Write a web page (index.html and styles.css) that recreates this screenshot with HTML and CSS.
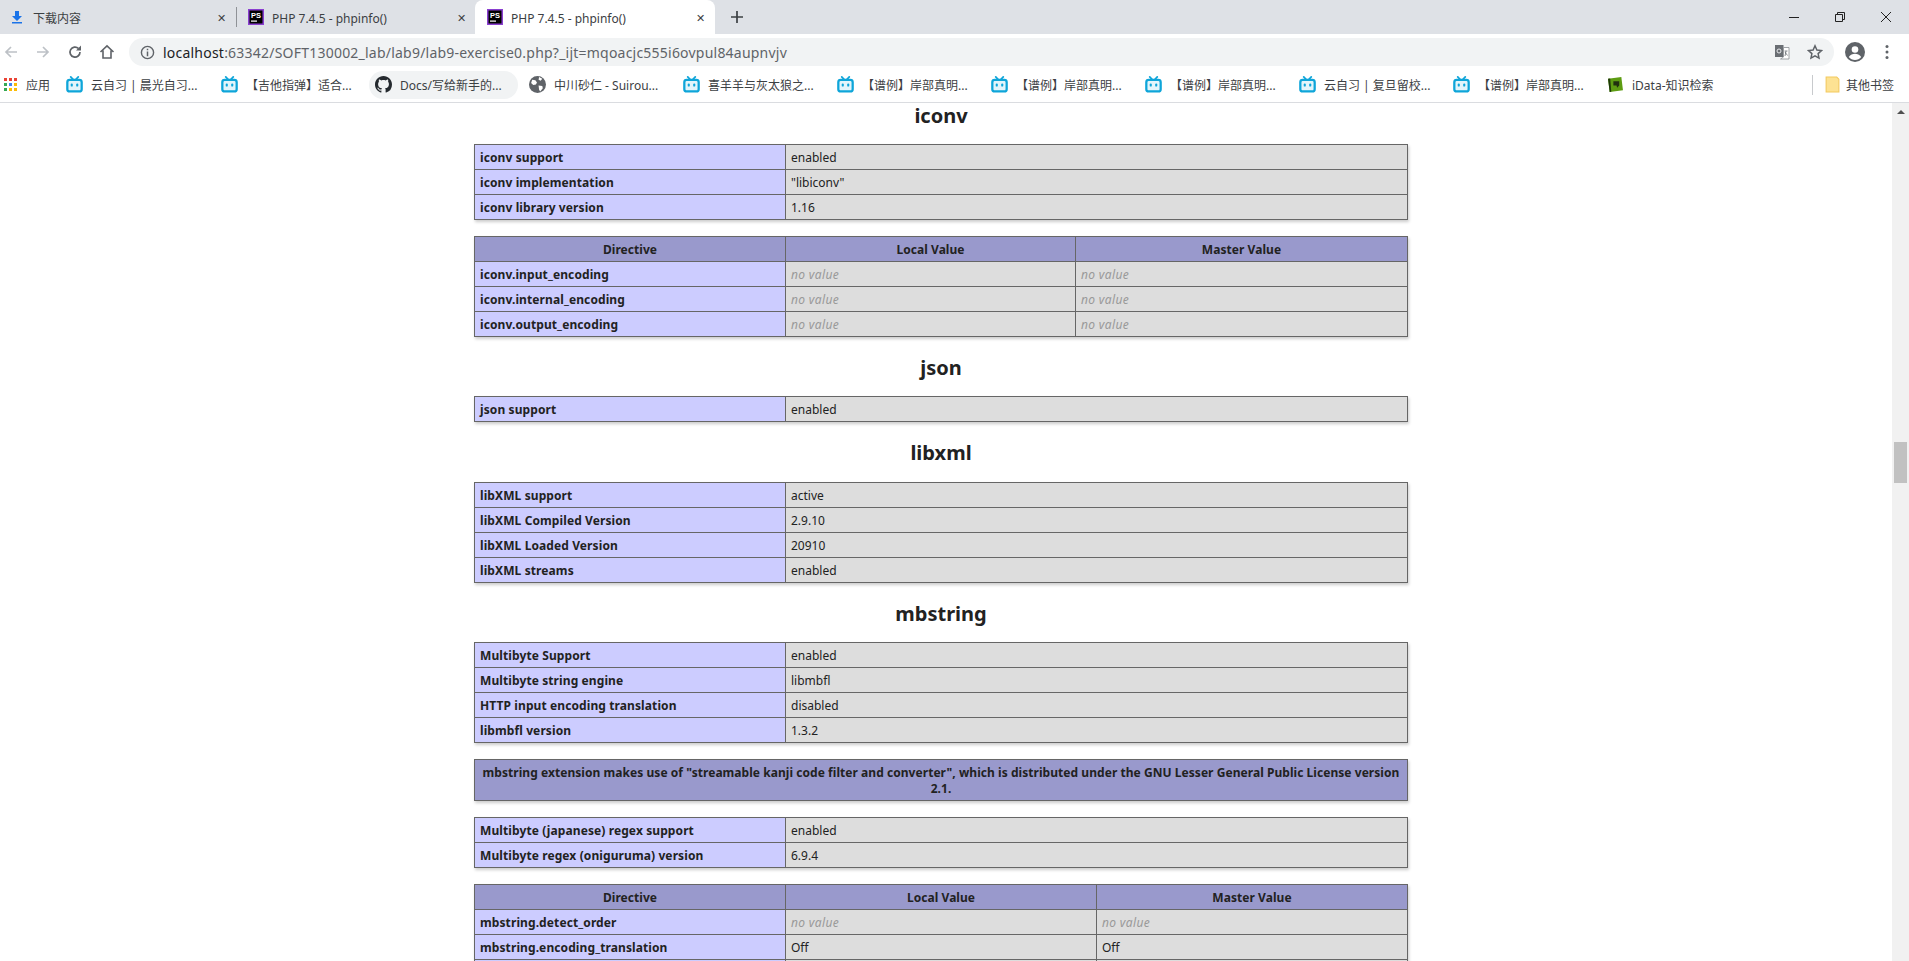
FILE: index.html
```html
<!DOCTYPE html>
<html lang="en">
<head>
    <meta charset="UTF-8">
    <title>PHP 7.4.5 - phpinfo()</title>
    <link rel="stylesheet" href="styles.css">
</head>
<body>
    <svg class="defs" width="0" height="0">
        <symbol id="bili" viewBox="0 0 18 18">
            <path d="M5 1l2.5 2.6M13 1l-2.500 2.600" stroke="#0ea5d9" stroke-width="1.800" stroke-linecap="round" fill="none"/>
            <rect x="1.400" y="4" width="15.200" height="12.400" rx="2.500" fill="#e3f5fb" stroke="#0ea5d9" stroke-width="2.400"/>
            <rect x="5" y="8" width="2.200" height="3.200" rx="1" fill="#0ea5d9"/>
            <rect x="10.800" y="8" width="2.200" height="3.200" rx="1" fill="#0ea5d9"/>
        </symbol>
    </svg>

    <div class="tabstrip">
        <div class="tab tab-downloads">
            <svg class="tab-icon" viewBox="0 0 16 16"><path d="M6 2h4v5h3l-5 5-5-5h3z M3 13h10v1.500H3z" fill="#1a73e8"/></svg>
            <span class="tab-title">下载内容</span>
            <span class="tab-close">✕</span>
        </div>
        <div class="tab tab-second">
            <svg class="tab-icon" viewBox="0 0 16 16">
                <rect width="16" height="16" fill="#8a3fd0"/>
                <rect x="1.500" y="1.500" width="13" height="13" fill="#000"/>
                <text x="3" y="9" class="ps-text">PS</text>
                <rect x="3" y="11.500" width="6" height="1.200" fill="#fff"/>
            </svg>
            <span class="tab-title">PHP 7.4.5 - phpinfo()</span>
            <span class="tab-close">✕</span>
        </div>
        <div class="tab tab-active">
            <svg class="tab-icon" viewBox="0 0 16 16">
                <rect width="16" height="16" fill="#8a3fd0"/>
                <rect x="1.500" y="1.500" width="13" height="13" fill="#000"/>
                <text x="3" y="9" class="ps-text">PS</text>
                <rect x="3" y="11.500" width="6" height="1.200" fill="#fff"/>
            </svg>
            <span class="tab-title">PHP 7.4.5 - phpinfo()</span>
            <span class="tab-close">✕</span>
        </div>
        <svg class="new-tab" viewBox="0 0 12 12"><path d="M6 0v12M0 6h12" stroke="#3c4043" stroke-width="1.700"/></svg>
        <div class="window-controls">
            <svg viewBox="0 0 12 12"><path d="M1 6.500h10" stroke="#222" fill="none"/></svg>
            <svg viewBox="0 0 12 12"><path d="M1.500 3.500h7v7h-7z M3.500 3.500v-2h7v7h-2" stroke="#222" fill="none"/></svg>
            <svg viewBox="0 0 12 12"><path d="M1 1l10 10M11 1L1 11" stroke="#222" fill="none"/></svg>
        </div>
    </div>

    <div class="toolbar">
        <svg class="nav-icon" viewBox="0 0 16 16"><path d="M14 8H3M8 3L3 8l5 5" stroke="#bdc1c6" stroke-width="1.700" fill="none"/></svg>
        <svg class="nav-icon" viewBox="0 0 16 16"><path d="M2 8h11M8 3l5 5-5 5" stroke="#bdc1c6" stroke-width="1.700" fill="none"/></svg>
        <svg class="nav-icon" viewBox="0 0 16 16"><path d="M13 8a5 5 0 1 1-1.500-3.500" stroke="#5f6368" stroke-width="1.700" fill="none"/><path d="M14 1.500v5h-5z" fill="#5f6368"/></svg>
        <svg class="nav-icon" viewBox="0 0 16 16"><path d="M1.500 8L8 1.800 14.500 8M4 6.500V14h8V6.500" stroke="#5f6368" stroke-width="1.600" fill="none"/></svg>
        <div class="omnibox">
            <svg class="info-icon" viewBox="0 0 16 16"><circle cx="8" cy="8" r="6.500" stroke="#5f6368" stroke-width="1.500" fill="none"/><path d="M8 7v5M8 4v1.700" stroke="#5f6368" stroke-width="1.600"/></svg>
            <span class="url"><span class="url-host">localhost</span>:63342/SOFT130002_lab/lab9/lab9-exercise0.php?_ijt=mqoacjc555i6ovpul84aupnvjv</span>
            <svg class="translate-icon" viewBox="0 0 16 16"><rect x="1" y="1" width="8.500" height="12" fill="#6a6e73"/><path d="M9.500 3.500H15V15H6.500l3-2z" fill="#fff" stroke="#8a8e93" stroke-width=".8"/><circle cx="5" cy="7" r="2" stroke="#e8eaed" fill="none"/><path d="M10.500 7h3M12 7l-1 5M11 8l2.500 3.500" stroke="#6a6e73" stroke-width=".8" fill="none"/></svg>
            <svg class="star-icon" viewBox="0 0 16 16"><path d="M8 1.800l1.900 4.200 4.600.5-3.400 3.100.9 4.500L8 11.800l-4 2.300.9-4.500L1.500 6.500l4.600-.5z" stroke="#5f6368" stroke-width="1.500" fill="none"/></svg>
        </div>
        <svg class="avatar-icon" viewBox="0 0 20 20"><circle cx="10" cy="10" r="10" fill="#5f6368"/><circle cx="10" cy="7.500" r="3.300" fill="#fff"/><path d="M3.800 15c1.500-2.600 4-3.300 6.200-3.300s4.700.7 6.200 3.300c-1.500 1.900-3.700 3-6.200 3s-4.700-1.100-6.200-3z" fill="#fff"/></svg>
        <svg class="menu-icon" viewBox="0 0 4 16"><circle cx="2" cy="2.500" r="1.500" fill="#5f6368"/><circle cx="2" cy="8" r="1.500" fill="#5f6368"/><circle cx="2" cy="13.500" r="1.500" fill="#5f6368"/></svg>
    </div>

    <div class="bookmarks">
        <div class="bm bm-apps">
            <svg class="bm-icon apps-icon" viewBox="0 0 14 14">
                <rect x="0" y="0" width="3" height="3" fill="#ea4335"/><rect x="5" y="0" width="3" height="3" fill="#ea4335"/><rect x="10" y="0" width="3" height="3" fill="#ea4335"/>
                <rect x="0" y="5" width="3" height="3" fill="#34a853"/><rect x="5" y="5" width="3" height="3" fill="#4285f4"/><rect x="10" y="5" width="3" height="3" fill="#fbbc05"/>
                <rect x="0" y="10" width="3" height="3" fill="#34a853"/><rect x="5" y="10" width="3" height="3" fill="#fbbc05"/><rect x="10" y="10" width="3" height="3" fill="#fbbc05"/>
            </svg>
            <span>应用</span>
        </div>
        <div class="bm bm-wide"><svg class="bm-icon"><use href="#bili"/></svg><span>云自习 | 晨光自习...</span></div>
        <div class="bm"><svg class="bm-icon"><use href="#bili"/></svg><span>【吉他指弹】适合...</span></div>
        <div class="bm bm-hover">
            <svg class="bm-icon" viewBox="0 0 16 16"><path fill="#24292e" d="M8 0C3.580 0 0 3.580 0 8c0 3.540 2.290 6.530 5.470 7.590.4.070.55-.17.55-.38 0-.19-.01-.82-.01-1.490-2.010.37-2.530-.49-2.690-.94-.09-.23-.48-.94-.82-1.130-.28-.15-.68-.52-.01-.53.63-.01 1.080.58 1.230.82.72 1.210 1.870.87 2.330.66.070-.52.280-.87.510-1.070-1.780-.2-3.640-.89-3.640-3.950 0-.87.310-1.590.820-2.150-.080-.2-.360-1.020.080-2.120 0 0 .670-.210 2.200.820.640-.180 1.320-.270 2-.270s1.360.090 2 .270c1.530-1.040 2.200-.820 2.200-.820.440 1.100.160 1.920.080 2.120.510.560.820 1.270.820 2.150 0 3.070-1.870 3.750-3.650 3.950.290.250.540.730.540 1.480 0 1.070-.010 1.930-.010 2.200 0 .210.150.460.550.380A8.010 8.010 0 0 0 16 8c0-4.420-3.580-8-8-8z"/></svg>
            <span>Docs/写给新手的...</span>
        </div>
        <div class="bm">
            <svg class="bm-icon" viewBox="0 0 16 16"><circle cx="8" cy="8" r="8" fill="#5f6368"/><path d="M3 3.500l3 .5 1.500 2-1 2-2.500.5-2-2zM9 9l3.500.5.5 2-2.500 3-1-1.500zM9.500 1l3 1.500-1.500 2-2-1z" fill="#fff"/></svg>
            <span>中川砂仁 - Suirou...</span>
        </div>
        <div class="bm"><svg class="bm-icon"><use href="#bili"/></svg><span>喜羊羊与灰太狼之...</span></div>
        <div class="bm"><svg class="bm-icon"><use href="#bili"/></svg><span>【谱例】岸部真明...</span></div>
        <div class="bm"><svg class="bm-icon"><use href="#bili"/></svg><span>【谱例】岸部真明...</span></div>
        <div class="bm"><svg class="bm-icon"><use href="#bili"/></svg><span>【谱例】岸部真明...</span></div>
        <div class="bm"><svg class="bm-icon"><use href="#bili"/></svg><span>云自习 | 复旦留校...</span></div>
        <div class="bm"><svg class="bm-icon"><use href="#bili"/></svg><span>【谱例】岸部真明...</span></div>
        <div class="bm">
            <svg class="bm-icon" viewBox="0 0 16 16"><path d="M1 2.500L13.500 1 15 13.500 2.500 15z" fill="#5d9c12"/><path d="M1 2.500L2.500 15 4 14.800 3 2.300z" fill="#1e3a08"/><path d="M6 5h5.500v4L9.500 11 9 9H6z" fill="#20300f"/></svg>
            <span>iData-知识检索</span>
        </div>
        <div class="bm-divider"></div>
        <div class="bm bm-other">
            <svg class="bm-icon" viewBox="0 0 16 16"><path d="M2 1h10l2 2v12H2z" fill="#fde293" stroke="#f3c95f"/></svg>
            <span>其他书签</span>
        </div>
    </div>

    <div class="viewport">
        <div class="page">
            <h2 class="h2-first">iconv</h2>
            <table>
                <colgroup><col class="col-name"><col></colgroup>
                <tr><td class="e">iconv support</td><td class="v">enabled</td></tr>
                <tr><td class="e">iconv implementation</td><td class="v">"libiconv"</td></tr>
                <tr><td class="e">iconv library version</td><td class="v">1.16</td></tr>
            </table>
            <table>
                <colgroup><col class="col-name"><col class="col-local-iconv"><col></colgroup>
                <tr class="h"><th>Directive</th><th>Local Value</th><th>Master Value</th></tr>
                <tr><td class="e">iconv.input_encoding</td><td class="v"><i>no value</i></td><td class="v"><i>no value</i></td></tr>
                <tr><td class="e">iconv.internal_encoding</td><td class="v"><i>no value</i></td><td class="v"><i>no value</i></td></tr>
                <tr><td class="e">iconv.output_encoding</td><td class="v"><i>no value</i></td><td class="v"><i>no value</i></td></tr>
            </table>

            <h2>json</h2>
            <table>
                <colgroup><col class="col-name"><col></colgroup>
                <tr><td class="e">json support</td><td class="v">enabled</td></tr>
            </table>

            <h2>libxml</h2>
            <table>
                <colgroup><col class="col-name"><col></colgroup>
                <tr><td class="e">libXML support</td><td class="v">active</td></tr>
                <tr><td class="e">libXML Compiled Version</td><td class="v">2.9.10</td></tr>
                <tr><td class="e">libXML Loaded Version</td><td class="v">20910</td></tr>
                <tr><td class="e">libXML streams</td><td class="v">enabled</td></tr>
            </table>

            <h2>mbstring</h2>
            <table>
                <colgroup><col class="col-name"><col></colgroup>
                <tr><td class="e">Multibyte Support</td><td class="v">enabled</td></tr>
                <tr><td class="e">Multibyte string engine</td><td class="v">libmbfl</td></tr>
                <tr><td class="e">HTTP input encoding translation</td><td class="v">disabled</td></tr>
                <tr><td class="e">libmbfl version</td><td class="v">1.3.2</td></tr>
            </table>
            <table>
                <tr class="h"><th>mbstring extension makes use of "streamable kanji code filter and converter", which is distributed under the GNU Lesser General Public License version 2.1.</th></tr>
            </table>
            <table>
                <colgroup><col class="col-name"><col></colgroup>
                <tr><td class="e">Multibyte (japanese) regex support</td><td class="v">enabled</td></tr>
                <tr><td class="e">Multibyte regex (oniguruma) version</td><td class="v">6.9.4</td></tr>
            </table>
            <table>
                <colgroup><col class="col-name"><col class="col-local-mb"><col></colgroup>
                <tr class="h"><th>Directive</th><th>Local Value</th><th>Master Value</th></tr>
                <tr><td class="e">mbstring.detect_order</td><td class="v"><i>no value</i></td><td class="v"><i>no value</i></td></tr>
                <tr><td class="e">mbstring.encoding_translation</td><td class="v">Off</td><td class="v">Off</td></tr>
                <tr><td class="e">&nbsp;</td><td class="v">&nbsp;</td><td class="v">&nbsp;</td></tr>
            </table>
        </div>
        <div class="scrollbar">
            <div class="scroll-up"></div>
            <div class="scroll-thumb"></div>
        </div>
    </div>
</body>
</html>
```

FILE: styles.css
```css
* {
    box-sizing: border-box;
}

html, body {
    height: 100%;
}

body {
    margin: 0;
    display: flex;
    flex-direction: column;
    overflow: hidden;
    background-color: #fff;
    color: #222;
    font-family: "Noto Sans", "Noto Sans CJK SC", sans-serif;
}

.defs {
    position: absolute;
}

.ps-text {
    fill: #fff;
    font-family: "Liberation Sans", sans-serif;
    font-size: 7.500px;
    font-weight: bold;
}

/* tabs */
.tabstrip {
    display: flex;
    align-items: center;
    height: 34px;
    flex-shrink: 0;
    background-color: #dee1e6;
}

.tab {
    display: flex;
    align-items: center;
    height: 34px;
    padding: 0 10px 0 12px;
    font-size: 12px;
    color: #3c4043;
}

.tab-downloads {
    width: 236px;
    padding-left: 9px;
}

.tab-second {
    width: 239px;
    border-left: 1px solid #8f9297;
    height: 20px;
    padding-left: 11px;
    padding-right: 9px;
}

.tab-active {
    width: 240px;
    background-color: #fff;
    border-radius: 8px 8px 0 0;
}

.tab-icon {
    width: 16px;
    height: 16px;
    flex-shrink: 0;
    margin-right: 8px;
}

.tab-title {
    flex: 1;
    padding-top: 2px;
    white-space: nowrap;
    overflow: hidden;
}

.tab-close {
    font-size: 11px;
    color: #3c4043;
}

.new-tab {
    width: 12px;
    height: 12px;
    margin-left: 16px;
}

.window-controls {
    display: flex;
    gap: 34px;
    margin-left: auto;
    padding-right: 17px;
}

.window-controls svg {
    width: 12px;
    height: 12px;
}

/* address bar */
.toolbar {
    display: flex;
    align-items: center;
    height: 36px;
    flex-shrink: 0;
    padding-left: 3px;
    background-color: #fff;
}

.nav-icon {
    width: 16px;
    height: 16px;
    margin-right: 16px;
}

.omnibox {
    display: flex;
    align-items: center;
    width: 1705px;
    height: 28px;
    margin-left: -2px;
    padding: 0 11px;
    background-color: #f1f3f4;
    border-radius: 14px;
}

.info-icon {
    width: 15px;
    height: 15px;
    margin-right: 8px;
}

.url {
    flex: 1;
    font-size: 14px;
    letter-spacing: .22px;
    color: #5f6368;
    white-space: nowrap;
}

.url-host {
    color: #202124;
}

.translate-icon {
    width: 16px;
    height: 16px;
    margin-right: 17px;
}

.star-icon {
    width: 16px;
    height: 16px;
}

.avatar-icon {
    width: 20px;
    height: 20px;
    margin-left: 11px;
}

.menu-icon {
    width: 4px;
    height: 16px;
    margin-left: 20px;
}

/* bookmarks */
.bookmarks {
    display: flex;
    align-items: center;
    gap: 5px;
    height: 33px;
    flex-shrink: 0;
    padding-bottom: 3px;
    background-color: #fff;
    border-bottom: 1px solid #dadce0;
    font-size: 12px;
    color: #3c4043;
}

.bm {
    display: flex;
    align-items: center;
    gap: 8px;
    width: 149px;
    height: 28px;
    padding: 0 6px;
    white-space: nowrap;
    border-radius: 14px;
}

.bm-icon {
    width: 17px;
    height: 17px;
    flex-shrink: 0;
}

.bm-apps {
    width: 55px;
    padding: 0 0 0 4px;
}

.apps-icon {
    width: 14px;
    height: 14px;
}

.bm-hover {
    background-color: #f1f3f4;
}

.bm-wide {
    width: 150px;
}

.bm-divider {
    width: 1px;
    height: 20px;
    margin-left: auto;
    background-color: #c8cacd;
}

.bm-other {
    width: auto;
    gap: 5px;
    padding-right: 15px;
}

/* page */
.viewport {
    display: flex;
    flex: 1;
    min-height: 0;
    overflow: hidden;
}

.page {
    flex: 1;
    padding-right: 10px;
    font-size: 16px;
}

h2 {
    margin: 0 0 16px;
    padding-top: 2px;
    font-size: 20px;
    line-height: 25.400px;
    font-weight: bold;
    text-align: center;
}

.h2-first {
    padding-top: 0;
    line-height: 25px;
}

table {
    width: 934px;
    margin: 0 auto 16px;
    table-layout: fixed;
    border-collapse: collapse;
    box-shadow: 1px 2px 3px #ccc;
    font-size: 12px;
    line-height: 16px;
}

td, th {
    padding: 5px 5px 3px;
    border: 1px solid #666;
    vertical-align: baseline;
}

.col-name {
    width: 311px;
}

.col-local-iconv {
    width: 290px;
}

.col-local-mb {
    width: 311px;
}

.e {
    background-color: #ccf;
    font-weight: bold;
    letter-spacing: .1px;
}

.v {
    background-color: #ddd;
}

.v i {
    color: #999;
    letter-spacing: .35px;
}

.h {
    background-color: #99c;
    font-weight: bold;
    letter-spacing: .05px;
    text-align: center;
}

/* scrollbar */
.scrollbar {
    position: relative;
    width: 17px;
    flex-shrink: 0;
    background-color: #f1f1f1;
}

.scroll-up {
    position: absolute;
    top: 7px;
    left: 5px;
    border-left: 4px solid transparent;
    border-right: 4px solid transparent;
    border-bottom: 4px solid #505050;
}

.scroll-thumb {
    position: absolute;
    top: 339px;
    left: 2px;
    width: 13px;
    height: 41px;
    background-color: #c1c1c1;
}
```
